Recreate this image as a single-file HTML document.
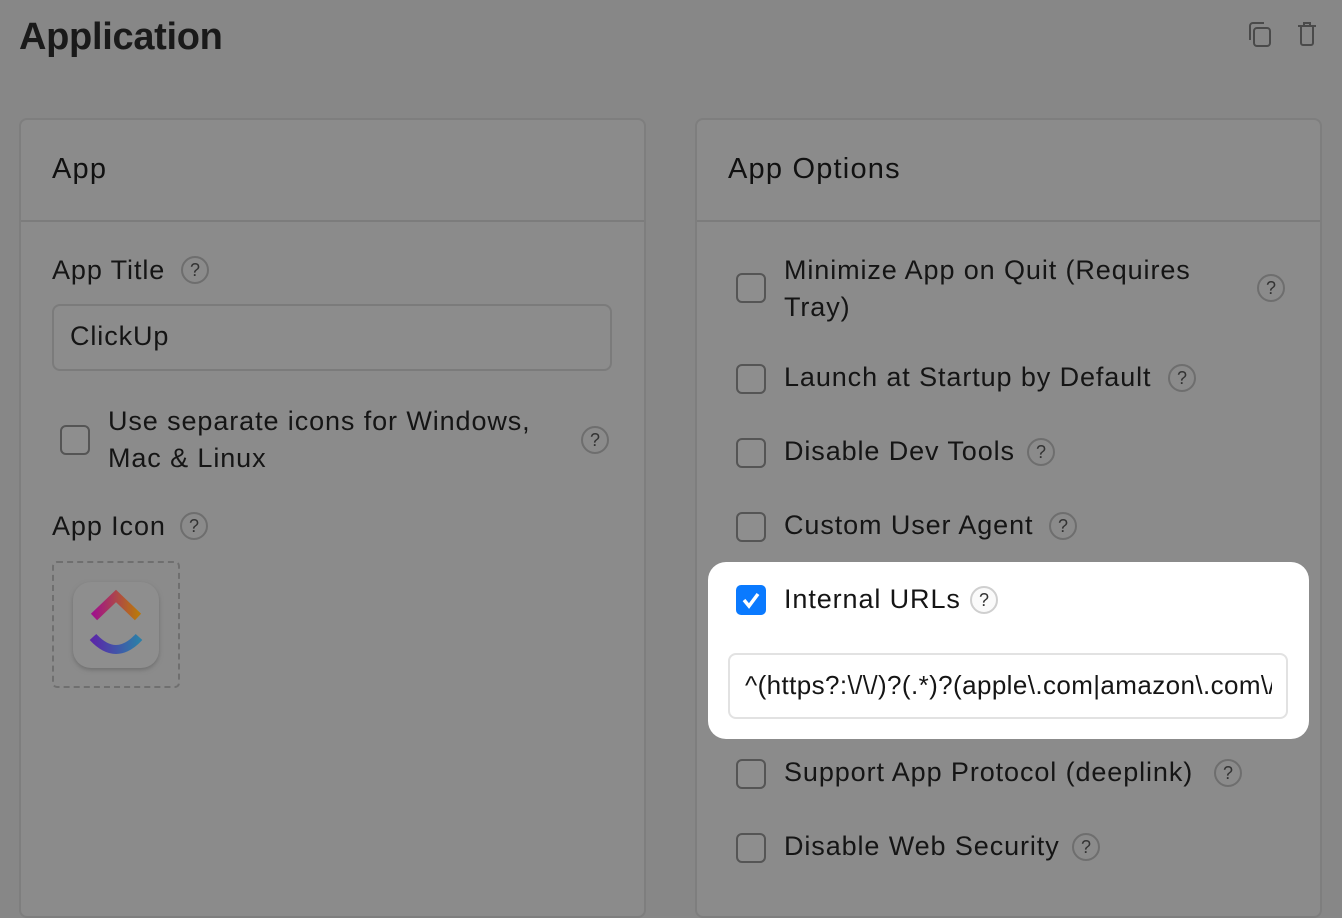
<!DOCTYPE html>
<html><head><style>
body{margin:0;width:1342px;height:884px;overflow:hidden;background:#878787;font-family:"Liberation Sans",sans-serif;color:#151515;position:relative}
.a{position:absolute}
.card{position:absolute;top:118px;height:800px;background:#8b8b8b;border:2px solid #7e7e7e;border-radius:8px;box-sizing:border-box}
.hd{position:absolute;left:0;right:0;top:0;height:100px;border-bottom:2px solid #7c7c7c}
.t{font-size:27px;letter-spacing:0.9px;white-space:nowrap}
.h{font-size:29px;letter-spacing:1.2px;white-space:nowrap;color:#111}
.q{position:absolute;width:28px;height:28px;border:2px solid #6e6e6e;border-radius:50%;box-sizing:border-box;font-size:18px;text-align:center;line-height:25px;color:#333}
.cb{position:absolute;width:30px;height:30px;border:2px solid #555;border-radius:6px;box-sizing:border-box;background:#8e8e8e}
</style></head><body>
<div class="a" style="left:19px;top:16px;font-size:38px;font-weight:bold;color:#1a1a1a;letter-spacing:-0.3px">Application</div>
<svg class="a" style="left:1246px;top:20px" width="30" height="30" viewBox="0 0 30 30" fill="none" stroke="#4a4a4a" stroke-width="2"><rect x="8" y="8" width="16" height="18" rx="3"/><path d="M4 20V6a3 3 0 0 1 3-3h11"/></svg>
<svg class="a" style="left:1294px;top:20px" width="26" height="28" viewBox="0 0 26 28" fill="none" stroke="#4a4a4a" stroke-width="2"><path d="M4 6h18M10 6V3h6v3M7 6v17a2 2 0 0 0 2 2h8a2 2 0 0 0 2-2V6"/></svg>

<div class="card" style="left:19px;width:627px"><div class="hd"></div></div>
<div class="a h" style="left:52px;top:153px">App</div>
<div class="a t" style="left:52px;top:255px">App Title</div><div class="q" style="left:181px;top:256px">?</div>
<div class="a" style="left:52px;top:304px;width:560px;height:67px;border:2px solid #7b7b7b;border-radius:8px;box-sizing:border-box;background:#8c8c8c"></div>
<div class="a t" style="left:70px;top:321px">ClickUp</div>
<div class="cb" style="left:60px;top:425px"></div>
<div class="a t" style="left:108px;top:403px;line-height:37px">Use separate icons for Windows,<br>Mac &amp; Linux</div>
<div class="q" style="left:581px;top:426px">?</div>
<div class="a t" style="left:52px;top:511px">App Icon</div><div class="q" style="left:180px;top:512px">?</div>
<div class="a" style="left:52px;top:561px;width:128px;height:127px;border:2px dashed #6f6f6f;border-radius:5px;box-sizing:border-box"></div>
<div class="a" style="left:73px;top:582px;width:86px;height:86px;border-radius:18px;background:#8e8e8e;box-shadow:0 2px 4px #6f6f6f"></div>
<svg class="a" style="left:73px;top:582px" width="86" height="86" viewBox="0 0 86 86"><defs><linearGradient id="g1" x1="0" x2="1"><stop offset="0" stop-color="#a0128a"/><stop offset="1" stop-color="#b9780c"/></linearGradient><linearGradient id="g2" x1="0" x2="1"><stop offset="0" stop-color="#5a28a8"/><stop offset="1" stop-color="#2b7fa8"/></linearGradient></defs><path d="M21 35L43 14L65 35" fill="none" stroke="url(#g1)" stroke-width="9"/><path d="M20 55Q43 80 66 55" fill="none" stroke="url(#g2)" stroke-width="9"/></svg>

<div class="card" style="left:695px;width:627px"><div class="hd"></div></div>
<div class="a h" style="left:728px;top:153px">App Options</div>
<div class="cb" style="left:736px;top:273px"></div>
<div class="a t" style="left:784px;top:252px;line-height:37px">Minimize App on Quit (Requires<br>Tray)</div>
<div class="q" style="left:1257px;top:274px">?</div>
<div class="cb" style="left:736px;top:364px"></div><div class="a t" style="left:784px;top:362px">Launch at Startup by Default</div><div class="q" style="left:1168px;top:364px">?</div>
<div class="cb" style="left:736px;top:438px"></div><div class="a t" style="left:784px;top:436px">Disable Dev Tools</div><div class="q" style="left:1027px;top:438px">?</div>
<div class="cb" style="left:736px;top:512px"></div><div class="a t" style="left:784px;top:510px">Custom User Agent</div><div class="q" style="left:1049px;top:512px">?</div>
<div class="a" style="left:708px;top:562px;width:601px;height:177px;background:#fff;border-radius:18px"></div>
<div class="a" style="left:736px;top:585px;width:30px;height:30px;background:#0a7aff;border-radius:5px"></div>
<svg class="a" style="left:736px;top:585px" width="30" height="30" viewBox="0 0 30 30"><path d="M8 15l5 6 9-12" fill="none" stroke="#fff" stroke-width="3.5"/></svg>
<div class="a t" style="left:784px;top:584px">Internal URLs</div>
<div class="q" style="left:970px;top:586px;border-color:#cfcfcf;background:#fafafa">?</div>
<div class="a" style="left:728px;top:653px;width:560px;height:66px;border:2px solid #e2e2e2;border-radius:8px;box-sizing:border-box"></div>
<div class="a t" style="left:745px;top:670px;width:527px;overflow:hidden;font-size:26px;letter-spacing:0.4px">^(https?:\/\/)?(.*)?(apple\.com|amazon\.com\/</div>
<div class="cb" style="left:736px;top:759px"></div><div class="a t" style="left:784px;top:757px">Support App Protocol (deeplink)</div><div class="q" style="left:1214px;top:759px">?</div>
<div class="cb" style="left:736px;top:833px"></div><div class="a t" style="left:784px;top:831px">Disable Web Security</div><div class="q" style="left:1072px;top:833px">?</div>
</body></html>
